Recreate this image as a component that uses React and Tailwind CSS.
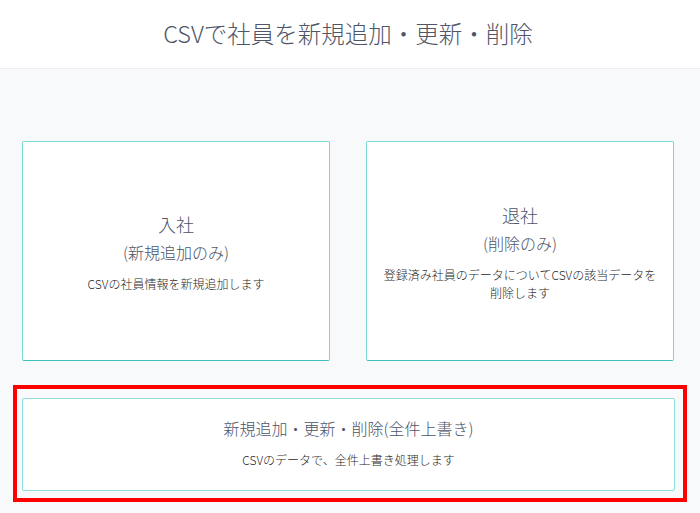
import React from "react";

const font = {
  fontFamily: '"Noto Sans CJK JP", "Noto Sans", sans-serif',
};

function Card({ title, sub, children, className = "" }) {
  return (
    <div
      className={`bg-white border border-[#7ad8d5] border-b-[#3fc0ba] rounded-[2px] flex flex-col items-center justify-center text-center ${className}`}
    >
      <p className="text-[18px] leading-[24px] font-light text-[#4c5468]">{title}</p>
      {sub && (
        <p className="mt-[4px] text-[16px] leading-[24px] font-light text-[#4c5468]">{sub}</p>
      )}
      <div className="mt-[11px] text-[12px] leading-[18px] font-light text-[#1f1f1f]">
        {children}
      </div>
    </div>
  );
}

export default function App() {
  return (
    <div className="min-h-[513px] bg-[#f8f9fb]" style={font}>
      {/* Header */}
      <header className="h-[69px] bg-white border-b border-[#eceef1] flex items-center justify-center pr-[4px]">
        <h1 className="text-[23.5px] font-light text-[#4f5667]">
          CSVで社員を新規追加・更新・削除
        </h1>
      </header>

      <main className="pl-[13px] pr-[13px] pt-[72px]">
        {/* Join / Leave */}
        <div className="grid grid-cols-2 gap-[36px] pl-[9px] pr-[13px]">
          <Card title="入社" sub="(新規追加のみ)" className="h-[220px] pt-[3px]">
            CSVの社員情報を新規追加します
          </Card>
          <Card title="退社" sub="(削除のみ)" className="h-[220px] pt-[3px]">
            登録済み社員のデータについてCSVの該当データを
            <br />
            削除します
          </Card>
        </div>

        {/* Full overwrite (highlighted) */}
        <div className="mt-[24px] border-4 border-[#ff0000] pl-[5px] pr-[8px] pt-[9px] pb-[7px]">
          <div className="h-[93px] pb-[4px] bg-white border border-[#8fdfdc] rounded-[2px] flex flex-col items-center justify-center text-center">
            <p className="text-[16px] leading-[24px] font-light text-[#4c5468]">
              新規追加・更新・削除(全件上書き)
            </p>
            <p className="mt-[11px] text-[12px] leading-[18px] font-light text-[#1f1f1f]">
              CSVのデータで、全件上書き処理します
            </p>
          </div>
        </div>
      </main>
    </div>
  );
}
